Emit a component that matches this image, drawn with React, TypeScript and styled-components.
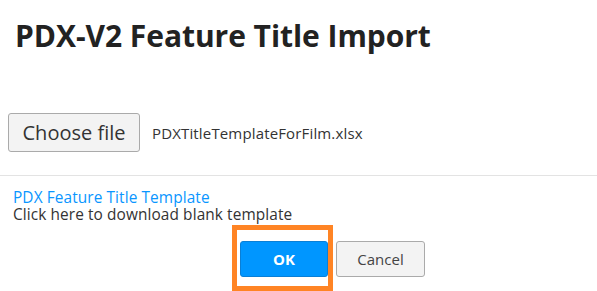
import React from "react";
import styled, { createGlobalStyle } from "styled-components";

const Global = createGlobalStyle`
  html, body { margin: 0; padding: 0; background: #fff; }
  body { font-family: "Open Sans", "Liberation Sans", sans-serif; color: #333; }
`;

const Dialog = styled.div`
  width: 597px;
  height: 291px;
  overflow: hidden;
  display: flex;
  flex-direction: column;
`;

const Title = styled.h2`
  margin: 0;
  padding: 18px 0 0 15px;
  font-size: 30px;
  font-weight: 700;
  color: #222;
  line-height: 36px;
  letter-spacing: -0.05px;
`;

const FileRow = styled.div`
  display: flex;
  align-items: center;
  gap: 12px;
  margin-top: 59px;
  padding-left: 8px;
`;

const ChooseButton = styled.button`
  box-sizing: border-box;
  width: 132px;
  height: 39px;
  font-family: inherit;
  font-size: 20px;
  color: #333;
  background: #f3f3f3;
  border: 1px solid #aaa;
  border-radius: 3px;
  padding: 0;
`;

const FileName = styled.span`
  font-size: 15px;
  letter-spacing: 0.15px;
  color: #333;
`;

const Divider = styled.hr`
  margin: 23px 0 0 0;
  border: 0;
  border-top: 1px solid #e3e3e3;
`;

const TemplateBlock = styled.div`
  padding: 13px 0 0 13px;
  font-size: 15.4px;
  line-height: 17px;
  letter-spacing: 0.1px;
`;

const TemplateLink = styled.a`
  display: block;
  color: #0a96ff;
  text-decoration: none;
`;

const Hint = styled.div`
  color: #333;
`;

const Footer = styled.div`
  display: flex;
  gap: 8px;
  padding: 18px 0 0 240px;
`;

const Highlight = styled.div`
  position: relative;
`;

const Annotation = styled.div`
  position: absolute;
  left: -8px;
  top: -16px;
  width: 101px;
  height: 66px;
  box-sizing: border-box;
  border: 5px solid #ff8424;
  pointer-events: none;
`;

const ActionButton = styled.button<{ $primary?: boolean }>`
  box-sizing: border-box;
  width: ${(p) => (p.$primary ? "88px" : "89px")};
  height: 36px;
  font-family: inherit;
  font-size: 15px;
  font-weight: ${(p) => (p.$primary ? 700 : 400)};
  color: ${(p) => (p.$primary ? "#fff" : "#444")};
  background: ${(p) => (p.$primary ? "#0096ff" : "#f3f3f3")};
  border: 1px solid ${(p) => (p.$primary ? "#0a7fd6" : "#aaa")};
  border-radius: 3px;
  padding: 0;
`;

export default function App() {
  return (
    <>
      <Global />
      <Dialog>
        <Title>PDX-V2 Feature Title Import</Title>
        <FileRow>
          <ChooseButton>Choose file</ChooseButton>
          <FileName>PDXTitleTemplateForFilm.xlsx</FileName>
        </FileRow>
        <Divider />
        <TemplateBlock>
          <TemplateLink href="#">PDX Feature Title Template</TemplateLink>
          <Hint>Click here to download blank template</Hint>
        </TemplateBlock>
        <Footer>
          <Highlight>
            <ActionButton $primary>OK</ActionButton>
            <Annotation />
          </Highlight>
          <ActionButton>Cancel</ActionButton>
        </Footer>
      </Dialog>
    </>
  );
}
